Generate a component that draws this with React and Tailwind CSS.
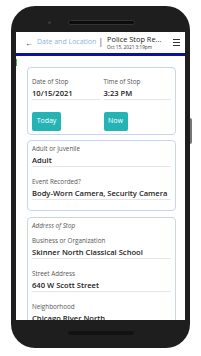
import React from "react";

function Field({ label, value, last }) {
  return (
    <div className={last ? "" : "mb-[11px]"}>
      <div className="text-[6.3px] leading-[8px] text-[#555]">{label}</div>
      <div className="mt-[2px] border-b border-[#e6e6e6] pb-[1px] text-[7.6px] font-semibold leading-[10px] text-[#222] whitespace-nowrap">
        {value}
      </div>
    </div>
  );
}

export default function App() {
  return (
    <div
      className="w-[201px] h-[356px] bg-white overflow-hidden"
      style={{ fontFamily: "'Open Sans', 'Liberation Sans', sans-serif" }}
    >
      <div className="relative ml-[11px] mt-[6px] w-[179px] h-[342px] rounded-[24px] bg-[#1e1e1e] pt-[26px] pl-[5px]">
        {/* speaker + camera */}
        <div className="absolute left-[37px] top-[15px] h-[3px] w-[3px] rounded-full bg-[#3a3a3a]" />
        <div className="absolute left-[57px] top-[14px] h-[5px] w-[67px] rounded-full bg-[#0c0c0c] border border-[#333]" />
        {/* side button */}
        <div className="absolute right-[-2px] top-[112px] h-[26px] w-[2px] rounded-r bg-[#777]" />
        {/* home bar */}
        <div className="absolute left-[57px] top-[325px] h-[4px] w-[66px] rounded-full bg-[#121212]" />

        <div className="w-[169px] h-[288px] bg-white overflow-hidden flex flex-col">
          {/* header */}
          <div className="h-[21px] flex items-center shrink-0">
            <span className="ml-[9px] w-[12px] shrink-0 text-[8px] leading-none text-[#222]">←</span>
            <span className="shrink-0 text-[7px] text-[#8db0e4] whitespace-nowrap">Date and Location</span>
            <span className="ml-[2px] shrink-0 text-[8.5px] text-[#444] leading-none">|</span>
            <div className="ml-[4px] flex flex-col leading-none shrink-0">
              <span className="text-[7.4px] text-[#222] whitespace-nowrap leading-[9px]">Police Stop Re...</span>
              <span className="text-[4.7px] text-[#333] whitespace-nowrap leading-[6px]">Oct 15, 2021 3:19pm</span>
            </div>
            <div className="ml-auto mr-[5px] shrink-0 flex flex-col gap-[1.5px]">
              <div className="h-[1.2px] w-[7px] bg-[#333]" />
              <div className="h-[1.2px] w-[7px] bg-[#333]" />
              <div className="h-[1.2px] w-[7px] bg-[#333]" />
            </div>
          </div>
          <div className="h-[3px] bg-[#0b129e] shrink-0" />

          <div className="relative flex-1 pt-[11px] pl-[11px] pr-[9px]">
            <div className="absolute left-0 top-[3px] h-[7px] w-[1px] bg-[#4caf50]" />
            {/* card 1 */}
            <div className="rounded-[4px] border border-[#c6d6f0] px-[4px] pt-[10px] pb-[3px]">
              <div className="grid grid-cols-2 gap-x-[4px]">
                <Field label="Date of Stop" value="10/15/2021" last />
                <Field label="Time of Stop" value="3:23 PM" last />
              </div>
              <div className="mt-[12px] grid grid-cols-2 gap-x-[4px]">
                <div>
                  <div className="w-[29px] h-[19px] rounded-[2px] bg-[#26b3b6] text-white text-[7px] flex items-center justify-center">Today</div>
                </div>
                <div>
                  <div className="w-[24px] h-[19px] rounded-[2px] bg-[#26b3b6] text-white text-[7px] flex items-center justify-center">Now</div>
                </div>
              </div>
            </div>

            {/* card 2 */}
            <div className="mt-[5px] rounded-[4px] border border-[#c6d6f0] px-[4px] pt-[4px] pb-[10px]">
              <Field label="Adult or Juvenile" value="Adult" />
              <Field label="Event Recorded?" value="Body-Worn Camera, Security Camera" last />
            </div>

            {/* card 3 */}
            <div className="mt-[6px] rounded-[4px] border border-[#c6d6f0] px-[4px] pt-[4px] pb-[10px]">
              <div className="text-[6.3px] leading-[8px] italic text-[#555] mb-[7px]">Address of Stop</div>
              <Field label="Business or Organization" value="Skinner North Classical School" />
              <Field label="Street Address" value="640 W Scott Street" />
              <Field label="Neighborhood" value="Chicago River North" />
            </div>
          </div>
        </div>
      </div>
    </div>
  );
}
